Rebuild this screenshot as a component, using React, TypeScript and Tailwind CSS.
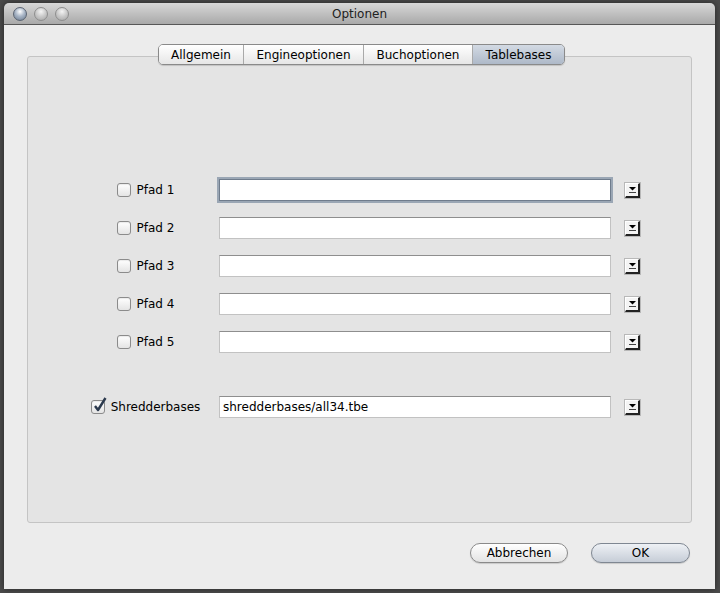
import React from 'react';

const font = { fontFamily: '"DejaVu Sans", "Liberation Sans", sans-serif' };

const tabs = [
  { label: 'Allgemein', w: 'w-[84px]' },
  { label: 'Engineoptionen', w: 'w-[120px]' },
  { label: 'Buchoptionen', w: 'w-[109px]' },
  { label: 'Tablebases', w: 'w-[92px]', active: true },
];

function Checkbox({ checked }: { checked?: boolean }) {
  return (
    <div className="relative w-[14px] h-[14px] rounded-[3px] border border-[#8b8b8b] bg-gradient-to-b from-white to-[#e4e4e4] shadow-[inset_0_1px_1px_rgba(0,0,0,0.08)]">
      {checked && (
        <svg className="absolute -top-[4px] left-[1px]" width="14" height="15" viewBox="0 0 14 15">
          <path d="M2 9 L5 13 L12.5 1" fill="none" stroke="#2c3a4e" strokeWidth="2.4" strokeLinejoin="round" />
        </svg>
      )}
    </div>
  );
}

function DropButton() {
  return (
    <div className="w-[15px] h-[15px] bg-[#f4f4f4] border-t border-l border-t-white border-l-white border-r-[2px] border-b-[2px] border-r-[#222] border-b-[#222] flex items-center justify-center shadow-[0_0_0_1px_#b8b8b8]">
      <svg width="9" height="7" viewBox="0 0 9 7">
        <path d="M1 1 L8 1 L4.5 4.5 Z" fill="#000" />
        <rect x="1" y="6" width="7" height="1" fill="#444" />
      </svg>
    </div>
  );
}

function Row({ label, value, checked, focused, shredder }: { label: string; value?: string; checked?: boolean; focused?: boolean; shredder?: boolean }) {
  return (
    <div className={`flex items-center h-[22px] pl-[44px] ${shredder ? 'mt-[27px]' : ''}`}>
      <div className="w-[147px] flex items-center justify-center gap-[6px]">
        <Checkbox checked={checked} />
        <span className="text-[12px] text-black leading-none">{label}</span>
      </div>
      <div
        className={`w-[392px] h-[22px] bg-white flex items-center px-[3px] text-[12px] text-black ${
          focused
            ? 'border border-[#6f7c8c] shadow-[0_0_0_2px_#9aa6b4]'
            : 'border border-[#c2c2c2] border-t-[#8e8e8e]'
        }`}
      >
        {value}
      </div>
      <div className="ml-[14px]">
        <DropButton />
      </div>
    </div>
  );
}

export default function App() {
  return (
    <div className="w-[720px] h-[593px] bg-[#4b4b4b] pt-[3px] pl-[4px] overflow-hidden" style={font}>
      <div className="w-[711px] h-[586px] flex flex-col rounded-t-[5px] overflow-hidden shadow-[0_0_6px_rgba(0,0,0,0.5)]">
        {/* title bar */}
        <div className="relative h-[22px] flex items-center bg-gradient-to-b from-[#d8d8d8] to-[#a9a9a9] border-b border-[#575757]">
          <div className="flex gap-[7px] pl-[9px]">
            <div className="w-[14px] h-[14px] rounded-full border border-[#5b6472] bg-[radial-gradient(circle_at_50%_30%,#ffffff_0%,#a9b6c7_45%,#6b7a8e_100%)]" />
            <div className="w-[14px] h-[14px] rounded-full border border-[#8e8e8e] bg-[radial-gradient(circle_at_50%_30%,#f4f4f4_0%,#c8c8c8_50%,#a5a5a5_100%)]" />
            <div className="w-[14px] h-[14px] rounded-full border border-[#8e8e8e] bg-[radial-gradient(circle_at_50%_30%,#f4f4f4_0%,#c8c8c8_50%,#a5a5a5_100%)]" />
          </div>
          <div className="absolute inset-0 flex items-center justify-center text-[12px] text-[#222]">Optionen</div>
        </div>

        {/* content */}
        <div className="flex-1 bg-[#ececec] flex flex-col pt-[31px] px-[23px]">
          <div className="relative h-[467px] bg-[#e4e4e4] border border-[#c4c4c4] rounded-[3px] flex flex-col pt-[122px] gap-[16px]">
            <div className="absolute -top-[13px] left-[130px] flex h-[21px] rounded-[5px] border border-[#8a8a8a] overflow-hidden shadow-[0_1px_1px_rgba(0,0,0,0.15)]">
              {tabs.map((t, i) => (
                <div
                  key={t.label}
                  className={`${t.w} flex items-center justify-center text-[12px] text-black ${
                    i > 0 ? 'border-l border-[#a9a9a9]' : ''
                  } ${
                    t.active
                      ? 'bg-gradient-to-b from-[#d3dae4] to-[#aeb9c8]'
                      : 'bg-gradient-to-b from-white to-[#e6e6e6]'
                  }`}
                >
                  {t.label}
                </div>
              ))}
            </div>

            <Row label="Pfad 1" focused />
            <Row label="Pfad 2" />
            <Row label="Pfad 3" />
            <Row label="Pfad 4" />
            <Row label="Pfad 5" />
            <Row label="Shredderbases" value="shredderbases/all34.tbe" checked shredder />
          </div>

          <div className="flex justify-end gap-[23px] mt-[20px] pr-[2px]">
            <button className="w-[98px] h-[20px] rounded-full border border-[#8a8a8a] bg-gradient-to-b from-white to-[#e3e3e3] text-[12px] text-black shadow-[0_1px_1px_rgba(0,0,0,0.15)]">
              Abbrechen
            </button>
            <button className="w-[99px] h-[20px] rounded-full border border-[#7f8792] bg-gradient-to-b from-[#eef1f5] to-[#c6cdd7] text-[12px] text-black shadow-[0_1px_1px_rgba(0,0,0,0.15)]">
              OK
            </button>
          </div>
        </div>
      </div>
    </div>
  );
}
